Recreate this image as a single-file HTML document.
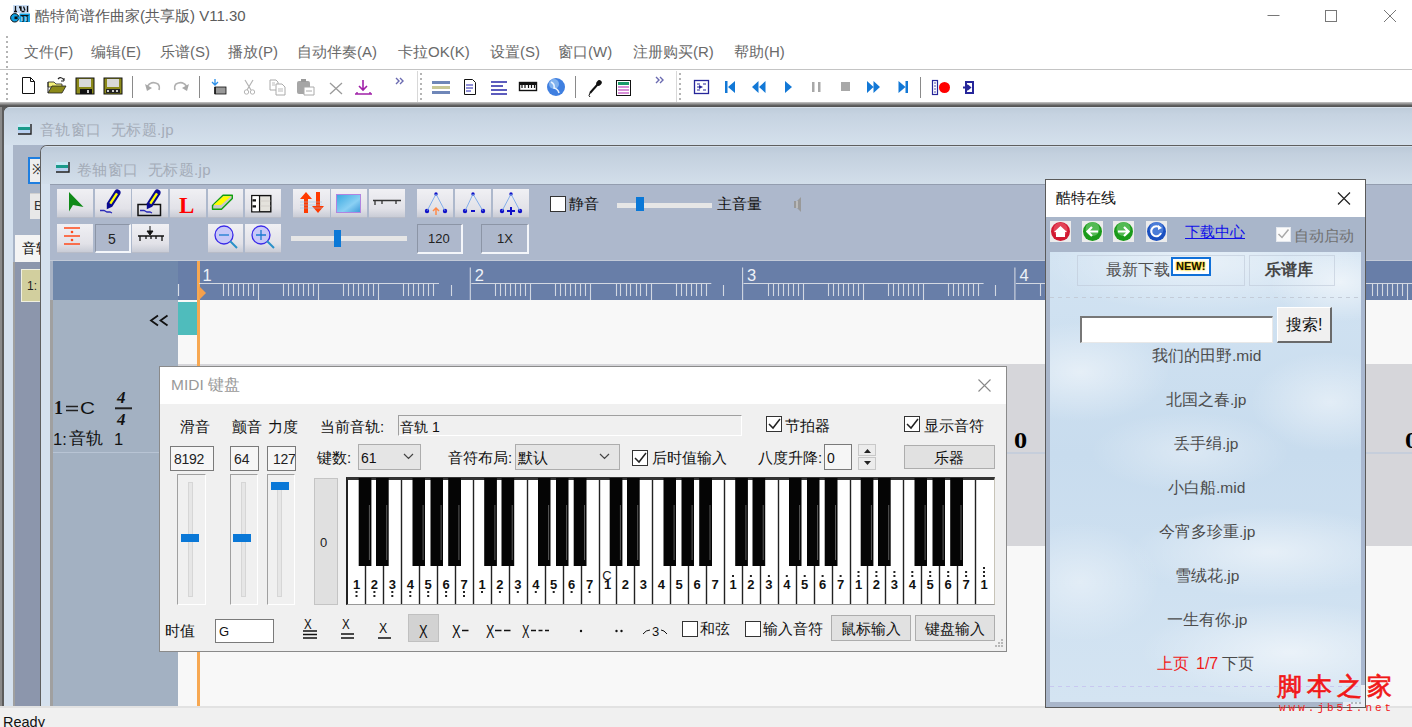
<!DOCTYPE html>
<html><head><meta charset="utf-8">
<style>
*{box-sizing:border-box;margin:0;padding:0}
html,body{width:1412px;height:727px;overflow:hidden;background:#fff;font-family:"Liberation Sans",sans-serif;position:relative}
.a{position:absolute}
.t{position:absolute;white-space:nowrap;line-height:1}
svg{position:absolute;overflow:visible}
.edit{background:#f6f6f6;border:1px solid #7a7a7a}
.cb{width:16px;height:16px;background:#fff;border:1px solid #333}
.wbtn{background:#e1e1e1;border:1px solid #adadad}
.slb{background:#f0f0f0;border-top:1px solid #a0a0a0;border-left:1px solid #a0a0a0;border-bottom:1px solid #fff;border-right:1px solid #fff}
.btn{background:linear-gradient(#f0f0f4,#e2e2e8 70%,#c9ccd6);border-bottom:1px solid #b8bcc8}
.sunk{background:#aeb8cc;border-top:1px solid #8c95a6;border-left:1px solid #8c95a6;border-bottom:2px solid #f4f6fa;border-right:2px solid #f4f6fa}
</style></head><body>

<!-- ===== title bar ===== -->
<div class="a" style="left:0;top:0;width:1412px;height:33px;background:#fff"></div>
<svg style="left:0;top:0" width="40" height="30">
 <rect x="13" y="5" width="16" height="8" fill="#c8dcf4"/>
 <path d="M15.5 6v5M19 7h2v4M23.5 6.5l1.5 4M27.5 6v6M14 11.5h3M21.5 11.5h3" stroke="#111" stroke-width="1.3"/>
 <circle cx="14.8" cy="17.8" r="4.2" fill="#0ea0e2" stroke="#111" stroke-width="1"/>
 <rect x="14.5" y="16.5" width="3.5" height="2.6" fill="#111"/><rect x="17.5" y="16.8" width="2.5" height="2" fill="#0ea0e2"/>
 <rect x="19.5" y="13.5" width="10.5" height="8.5" fill="#0ea0e2"/>
 <path d="M23 16v6M27 16v6M20.5 15.5h8" stroke="#111" stroke-width="1.2"/>
 <path d="M22 17v4M26 17v4" stroke="#e8f4ff" stroke-width="1"/>
</svg>
<div class="t" style="left:35px;top:8px;font-size:15px;color:#5c5c5c">酷特简谱作曲家(共享版) V11.30</div>
<svg style="left:1260px;top:0" width="152" height="33">
 <path d="M7.5 15.5h12" stroke="#777" stroke-width="1"/>
 <rect x="65.5" y="10.5" width="11" height="11" fill="none" stroke="#777" stroke-width="1"/>
 <path d="M124 10l12 12M136 10l-12 12" stroke="#777" stroke-width="1"/>
</svg>

<!-- ===== menu ===== -->
<div class="a" style="left:6px;top:36px;width:2px;height:32px;background:repeating-linear-gradient(#b4b4b4 0 2px,transparent 2px 5px)"></div>
<div class="t" style="left:24px;top:44px;font-size:15px;color:#6a6a6a">文件(F)</div>
<div class="t" style="left:91px;top:44px;font-size:15px;color:#6a6a6a">编辑(E)</div>
<div class="t" style="left:160px;top:44px;font-size:15px;color:#6a6a6a">乐谱(S)</div>
<div class="t" style="left:228px;top:44px;font-size:15px;color:#6a6a6a">播放(P)</div>
<div class="t" style="left:297px;top:44px;font-size:15px;color:#6a6a6a">自动伴奏(A)</div>
<div class="t" style="left:398px;top:44px;font-size:15px;color:#6a6a6a">卡拉OK(K)</div>
<div class="t" style="left:490px;top:44px;font-size:15px;color:#6a6a6a">设置(S)</div>
<div class="t" style="left:558px;top:44px;font-size:15px;color:#6a6a6a">窗口(W)</div>
<div class="t" style="left:633px;top:44px;font-size:15px;color:#6a6a6a">注册购买(R)</div>
<div class="t" style="left:734px;top:44px;font-size:15px;color:#6a6a6a">帮助(H)</div>
<div class="a" style="left:0;top:69px;width:1412px;height:1px;background:#c4c4c4"></div>
<!-- ===== toolbar ===== -->
<div class="a" style="left:6px;top:73px;width:2px;height:29px;background:repeating-linear-gradient(#b4b4b4 0 2px,transparent 2px 5px)"></div>
<div class="a" style="left:420px;top:73px;width:2px;height:29px;background:repeating-linear-gradient(#b4b4b4 0 2px,transparent 2px 5px)"></div>
<div class="a" style="left:679px;top:73px;width:2px;height:29px;background:repeating-linear-gradient(#b4b4b4 0 2px,transparent 2px 5px)"></div>
<div class="a" style="left:417px;top:71px;width:1px;height:32px;background:#d8d8d8"></div>
<div class="a" style="left:676px;top:71px;width:1px;height:32px;background:#d8d8d8"></div>
<svg style="left:0;top:70px" width="1000" height="34">
 <!-- new -->
 <path d="M22.5 7.5h8l4 4v12h-12z" fill="#fff" stroke="#111" stroke-width="1"/><path d="M30.5 7.5v4h4" fill="none" stroke="#111"/>
 <!-- open -->
 <path d="M48 12h6l2 2h6v3h-14z" fill="#f4f07a" stroke="#222" stroke-width="0.8"/>
 <path d="M48 23l4-7h14l-4 7z" fill="#8c8a1a" stroke="#222" stroke-width="0.8"/>
 <path d="M48 12v11" stroke="#222"/>
 <path d="M58 9q3-3 6 1" fill="none" stroke="#222" stroke-width="1.2"/><path d="M64 8v3h-3" fill="none" stroke="#222"/>
 <!-- save -->
 <rect x="76" y="8" width="18" height="16" fill="#8c8a1a" stroke="#111"/>
 <rect x="79" y="9" width="12" height="8" fill="#d8d8d8"/>
 <rect x="80" y="19" width="12" height="5" fill="#111"/><rect x="87" y="20" width="2" height="3" fill="#ccc"/>
 <!-- save all -->
 <rect x="104" y="8" width="18" height="16" fill="#8c8a1a" stroke="#111"/>
 <rect x="107" y="9" width="12" height="8" fill="#d8d8d8"/>
 <rect x="106" y="19" width="14" height="4" fill="#222"/>
 <rect x="107" y="20" width="2" height="2" fill="#ccc"/><rect x="112" y="20" width="2" height="2" fill="#ccc"/><rect x="116" y="20" width="2" height="2" fill="#ccc"/>
 <path d="M132.5 6v22" stroke="#8a8a8a"/>
 <!-- undo redo -->
 <path d="M147 17q4-7 11-3q2 2 1 6" fill="none" stroke="#b0b0b0" stroke-width="1.6"/><path d="M145 14l2 7 5-3z" fill="#a8a8a8"/>
 <path d="M187 17q-4-7-11-3q-2 2-1 6" fill="none" stroke="#b0b0b0" stroke-width="1.6"/><path d="M189 14l-2 7-5-3z" fill="#a8a8a8"/>
 <path d="M199.5 6v22" stroke="#8a8a8a"/>
 <!-- insert -->
 <rect x="215" y="17" width="11" height="7" fill="#999" stroke="#111" stroke-width="0.8"/>
 <path d="M215 17v7" stroke="#111" stroke-width="1.5"/>
 <path d="M215 9v6M212 12l3 3 3-3" fill="none" stroke="#2a8ee8" stroke-width="1.3"/>
 <!-- cut -->
 <path d="M245 10l6 10M253 10l-6 10" stroke="#b4b4b4" stroke-width="1.2"/>
 <circle cx="246.5" cy="22" r="2.2" fill="none" stroke="#b4b4b4"/><circle cx="252.5" cy="22" r="2.2" fill="none" stroke="#b4b4b4"/>
 <!-- copy -->
 <path d="M270 10h6l2 2v8h-8z" fill="#fff" stroke="#aaa"/><path d="M276 14h6l3 3v8h-9z" fill="#fff" stroke="#aaa"/>
 <path d="M278 19h5M278 21h5M272 13h3M272 15h3" stroke="#bbb"/>
 <!-- paste -->
 <rect x="297" y="11" width="13" height="13" rx="2" fill="#a6a6a6"/><rect x="301" y="9" width="5" height="3" fill="#999"/>
 <path d="M304 17h10v8h-10z" fill="#fff" stroke="#aaa"/><path d="M306 21h6" stroke="#aaa"/>
 <!-- delete -->
 <path d="M330 13l12 11M342 13l-12 11" stroke="#9a9a9a" stroke-width="1.3"/>
 <!-- download -->
 <path d="M363 10v10M359 16l4 4 4-4" fill="none" stroke="#a020a8" stroke-width="1.6"/>
 <path d="M355 24h17M357 22v2M370 22v2" stroke="#a020a8" stroke-width="1.4"/>
 <!-- >> -->
 <path d="M396 8l3 3-3 3M400 8l3 3-3 3" fill="none" stroke="#6a6ab0" stroke-width="1.4"/>
 <!-- lines -->
 <rect x="432" y="11" width="18" height="3" fill="#6f87b8"/><rect x="432" y="16" width="18" height="3" fill="#c8c896"/><rect x="432" y="21" width="18" height="3" fill="#6f87b8"/>
 <!-- doc -->
 <path d="M464.5 9.5h8l3 3v12h-11z" fill="#fff" stroke="#111"/><path d="M466 15h7M466 18h7M466 21h5" stroke="#2222b0"/>
 <!-- align -->
 <path d="M491 12h16M491 16h12M491 20h16M491 24h16" stroke="#2727a8" stroke-width="1.3"/>
 <!-- piano -->
 <rect x="519.5" y="12.5" width="17" height="8" fill="#fff" stroke="#111" stroke-width="1.4"/><rect x="519" y="12" width="18" height="3" fill="#111"/><path d="M522 15v3M525 15v3M528.5 15v3M531.5 15v3M534.5 15v3" stroke="#111" stroke-width="1.2"/>
 <!-- globe -->
 <circle cx="556" cy="17" r="9" fill="#3f7fe0"/><circle cx="554" cy="14" r="5" fill="#9cc6f4" opacity="0.7"/><path d="M551 12q4 2 3 6q4 1 5 5" stroke="#e8f2ff" stroke-width="1.5" fill="none"/>
 <path d="M575.5 6v22" stroke="#8a8a8a"/>
 <!-- mic -->
 <path d="M590 23l8-9" stroke="#111" stroke-width="2"/><ellipse cx="599" cy="13" rx="2.5" ry="3" fill="#111" transform="rotate(40 599 13)"/><path d="M590 23q-2 3 0 4" fill="none" stroke="#111"/>
 <!-- list -->
 <rect x="616.5" y="10.5" width="14" height="15" fill="#fff" stroke="#111"/><rect x="618" y="12" width="11" height="3" fill="#1a9a6a"/>
 <path d="M618 17h11M618 20h11M618 23h11" stroke="#b020b0" stroke-width="1.2"/>
 <path d="M656 7l3 3-3 3M660 7l3 3-3 3" fill="none" stroke="#6a6ab0" stroke-width="1.4"/>
 <!-- transport -->
 <rect x="694.5" y="10.5" width="14" height="13" fill="#fff" stroke="#26269a" stroke-width="1.3"/><path d="M697 14h3M697 17h3M697 20h3M703 14h3M703 20h3" stroke="#26269a"/><path d="M699 15l4 2-4 2z" fill="#26269a"/>
 <path d="M725 11h2.5v12h-2.5zM735 11l-7 6 7 6z" fill="#1278d6"/>
 <path d="M758.5 11l-6.5 6 6.5 6zM765.5 11l-6.5 6 6.5 6z" fill="#1278d6"/>
 <path d="M785 11l7 6-7 6z" fill="#1278d6"/>
 <path d="M812 12h2.5v10h-2.5zM818 12h2.5v10h-2.5z" fill="#a8a8a8"/>
 <rect x="841" y="12" width="9" height="9" fill="#a8a8a8"/>
 <path d="M867 11l6.5 6-6.5 6zM873.5 11l6.5 6-6.5 6z" fill="#1278d6"/>
 <path d="M898.5 11l7 6-7 6zM905.5 11h2.5v12h-2.5z" fill="#1278d6"/>
 <path d="M920.5 7v21" stroke="#8a8a8a"/>
 <rect x="932.5" y="10.5" width="5" height="14" fill="#fff" stroke="#26269a" stroke-width="1.2"/><path d="M934 13h2M934 16h2M934 19h2M934 22h2" stroke="#26269a" stroke-width="0.8"/>
 <circle cx="944.5" cy="17.5" r="5.5" fill="#f00"/>
 <path d="M966 12h7v11h-7zM963 17.5h7M967 15l3 2.5-3 2.5" fill="none" stroke="#26269a" stroke-width="2"/>
</svg>

<!-- ===== MDI ===== -->
<div class="a" style="left:0;top:102px;width:1412px;height:605px;background:linear-gradient(#c8c8c8,#8c8c8c 2px,#4e4e4e 4px,#5c5c5c 5px);"></div>
<div class="a" style="left:0;top:107px;width:2px;height:600px;background:#8a8a8a"></div>

<!-- child 1 -->
<div class="a" style="left:4px;top:107px;width:1420px;height:600px;background:#d5e1ee;border-top-left-radius:6px"></div>
<div class="a" style="left:4px;top:107px;width:1420px;height:38px;background:linear-gradient(#e2eaf2,#bfcddb 1.5px,#c6d3e1 20%,#d4e0ec);border-top-left-radius:6px"></div>
<svg style="left:0;top:0" width="80" height="145">
 <rect x="18" y="124" width="12" height="3" fill="#c8e8f4"/><rect x="18" y="127" width="12" height="3" fill="#1a9a8a"/><rect x="18" y="130" width="12" height="3" fill="#b8d0f0"/><path d="M18 134h13v-10" fill="none" stroke="#222" stroke-width="1.4"/>
</svg>
<div class="t" style="left:40px;top:122px;font-size:15px;letter-spacing:0.4px;color:#a4acb8">音轨窗口&nbsp;&nbsp;无标题.jp</div>
<div class="a" style="left:13px;top:145px;width:1400px;height:561px;background:#a9b5c8"></div>
<div class="a" style="left:28px;top:157px;width:14px;height:27px;background:#eee;border:2px solid #1e7ee0"></div>
<div class="t" style="left:32px;top:162px;font-size:14px;color:#333">※</div>
<div class="a" style="left:30px;top:193px;width:12px;height:26px;background:#e8e8e8;border-top:1px solid #d0d0d0"></div>
<div class="t" style="left:34px;top:199px;font-size:13px;color:#333">B</div>
<div class="a" style="left:15px;top:235px;width:26px;height:27px;background:#f4f4f4"></div>
<div class="t" style="left:22px;top:241px;font-size:14px;color:#111">音轨</div>
<div class="a" style="left:13px;top:262px;width:2px;height:444px;background:#a0a0a0"></div>
<div class="a" style="left:15px;top:262px;width:26px;height:444px;background:#8c96ac"></div>
<div class="a" style="left:21px;top:269px;width:20px;height:33px;background:#d2cf9e;border:1px solid #f0f0e0"></div>
<div class="t" style="left:27px;top:280px;font-size:12px;color:#222">1:</div>

<!-- child 2 -->
<div class="a" style="left:40px;top:145px;width:1380px;height:561px;background:#5f5f5f;border-top-left-radius:7px"></div>
<div class="a" style="left:41px;top:146px;width:1380px;height:560px;background:#d5e1ee;border-top-left-radius:6px"></div>
<div class="a" style="left:41px;top:146px;width:1380px;height:38px;background:linear-gradient(#dfe8f1,#bccad9 1.5px,#c3d0de 20%,#d2deea);border-top-left-radius:6px"></div>
<svg style="left:0;top:0" width="80" height="185">
 <rect x="56" y="162" width="12" height="3" fill="#c8e8f4"/><rect x="56" y="165" width="12" height="3" fill="#1a9a8a"/><rect x="56" y="168" width="12" height="3" fill="#b8d0f0"/><path d="M56 172h13v-10" fill="none" stroke="#222" stroke-width="1.4"/>
</svg>
<div class="t" style="left:77px;top:162px;font-size:15px;letter-spacing:0.4px;color:#a4acb8">卷轴窗口&nbsp;&nbsp;无标题.jp</div>
<div class="a" style="left:50px;top:184px;width:1370px;height:522px;background:#adb8cc;border-top:1px solid #939daf"></div>
<div class="a" style="left:50px;top:260px;width:1370px;height:1px;background:#c2cad8"></div>
<div class="a btn" style="left:57px;top:189px;width:36px;height:29px"></div>
<div class="a btn" style="left:95px;top:189px;width:36px;height:29px"></div>
<div class="a btn" style="left:132px;top:189px;width:36px;height:29px"></div>
<div class="a btn" style="left:170px;top:189px;width:36px;height:29px"></div>
<div class="a btn" style="left:208px;top:189px;width:35px;height:29px"></div>
<div class="a btn" style="left:245px;top:189px;width:36px;height:29px"></div>
<div class="a btn" style="left:293px;top:189px;width:37px;height:29px"></div>
<div class="a btn" style="left:331px;top:189px;width:36px;height:29px"></div>
<div class="a btn" style="left:369px;top:189px;width:36px;height:29px"></div>
<div class="a btn" style="left:417px;top:189px;width:36px;height:29px"></div>
<div class="a btn" style="left:455px;top:189px;width:36px;height:29px"></div>
<div class="a btn" style="left:493px;top:189px;width:36px;height:29px"></div>
<div class="a btn" style="left:57px;top:224px;width:36px;height:29px"></div>
<div class="a btn" style="left:132px;top:224px;width:37px;height:29px"></div>
<div class="a btn" style="left:208px;top:224px;width:35px;height:29px"></div>
<div class="a btn" style="left:245px;top:224px;width:36px;height:29px"></div>
<div class="a sunk" style="left:95px;top:224px;width:36px;height:29px"></div>
<div class="t" style="left:108px;top:232px;font-size:14px;color:#222">5</div>
<div class="a sunk" style="left:417px;top:224px;width:46px;height:30px"></div>
<div class="t" style="left:428px;top:232px;font-size:13px;color:#222">120</div>
<div class="a sunk" style="left:481px;top:224px;width:48px;height:30px"></div>
<div class="t" style="left:497px;top:232px;font-size:13px;color:#222">1X</div>
<div class="a" style="left:291px;top:236px;width:116px;height:5px;background:#e6e6e6"></div>
<div class="a" style="left:334px;top:230px;width:7px;height:17px;background:#0a78d7"></div>
<div class="a" style="left:550px;top:196px;width:16px;height:16px;background:#fff;border:1px solid #333"></div>
<div class="t" style="left:569px;top:196px;font-size:15px;color:#111">静音</div>
<div class="a" style="left:617px;top:203px;width:95px;height:5px;background:#e6e6e6"></div>
<div class="a" style="left:636px;top:197px;width:8px;height:14px;background:#0a78d7"></div>
<div class="t" style="left:717px;top:196px;font-size:15px;color:#111">主音量</div>
<svg style="left:0;top:0" width="820" height="262">
 <!-- arrow -->
 <path d="M69 192v19.5l4-6.5 10.5 2z" fill="#108a18"/>
 <!-- pencil -->
 <path d="M106.8 203.3L114.8 190.8A3.2 3.2 0 0 1 120.2 194.2L112.2 206.7L106.8 209.2z" fill="#0a0a90"/><path d="M110.3 203.7L117.0 193.3" stroke="#ffff00" stroke-width="2.4"/>
 <path d="M100 210.5h4l3 1.5h3l2 1" fill="none" stroke="#2a2ab8" stroke-width="1.3"/>
 <!-- pencil box -->
 <rect x="138" y="204.5" width="22.5" height="11" fill="none" stroke="#111" stroke-width="1.5"/>
 <path d="M146.8 203.3L154.8 190.8A3.2 3.2 0 0 1 160.2 194.2L152.2 206.7L146.8 209.2z" fill="#0a0a90"/><path d="M150.3 203.7L157.0 193.3" stroke="#ffff00" stroke-width="2.4"/>
 <path d="M140 210.5h4l3 1.5h3l2 1" fill="none" stroke="#2a2ab8" stroke-width="1.3"/>
 <!-- eraser -->
 <path d="M212.5 205.5L223 195.2h9.3v3.4L221.5 209.3h-9z" fill="#c8c8c8" stroke="#10a010" stroke-width="1.4" stroke-linejoin="round"/>
 <path d="M213.5 205L223.5 196.2h7.5L221 205z" fill="#ffff00"/>
 <!-- grid -->
 <rect x="251.8" y="195.6" width="19" height="16.2" fill="#e4e2dc" stroke="#111" stroke-width="1.4"/><path d="M259.5 196v15.5" stroke="#111" stroke-width="1.3"/>
 <path d="M252.5 196.3h6.3v15h-6.3z" fill="#fff"/><path d="M252.5 199.3h3.5v2.2h-3.5zM252.5 205.3h3.5v2.2h-3.5z" fill="#111"/>
 <path d="M260 201h10.5M260 206h10.5" stroke="#cfcdc6" stroke-width="0.8"/>
 <!-- up down -->
 <path d="M304 213v-14h-4l6-7 6 7h-4v14z" fill="#ff3a00"/><path d="M316 192v14h-4l6 7 6-7h-4v-14z" fill="#ff3a00"/>
 <path d="M300 202h22M300 205h22M300 208h22" stroke="#9ac0e8" stroke-width="0.7" opacity="0.8"/>
 <!-- blue rect -->
 <defs><linearGradient id="bg1" x1="0" y1="0" x2="1" y2="1"><stop offset="0" stop-color="#38a8e0"/><stop offset="0.6" stop-color="#8ad0f4"/><stop offset="1" stop-color="#3a98d8"/></linearGradient></defs>
 <rect x="336.5" y="194.5" width="24" height="18" fill="url(#bg1)" stroke="#b084e0" stroke-width="1"/>
 <!-- line -->
 <path d="M373 200.5h28" stroke="#333" stroke-width="1.5"/><path d="M375 201v4M382 201v3M396 201v3" stroke="#333" stroke-width="1.3"/>
 <!-- triangles -->
 <g fill="#1010c8"><circle cx="436" cy="194" r="1.7"/><circle cx="427" cy="211" r="2.2"/><circle cx="445" cy="211" r="2.2"/>
 <circle cx="473" cy="194" r="1.7"/><circle cx="465" cy="211" r="2.2"/><circle cx="483" cy="211" r="2.2"/>
 <circle cx="511" cy="194" r="1.7"/><circle cx="502" cy="211" r="2.2"/><circle cx="520" cy="211" r="2.2"/></g>
 <path d="M436 194l-9 17M436 194l9 17M473 194l-8 17M473 194l10 17M511 194l-9 17M511 194l9 17" stroke="#6aa0e8" stroke-width="0.8"/>
 <path d="M436 215v-7M433 211l3-3 3 3" fill="none" stroke="#ff8a4a" stroke-width="1.5"/>
 <path d="M471 211h4" stroke="#1010c8" stroke-width="2"/>
 <path d="M507 211h8M511 207v8" stroke="#1010c8" stroke-width="2"/>
 <!-- row2 -->
 <path d="M64 228h16M64 236h16M64 244h16" stroke="#ff4a1a" stroke-width="1.3"/><circle cx="72" cy="232" r="1.3" fill="#ff4a1a"/><circle cx="72" cy="240" r="1.3" fill="#ff4a1a"/>
 <path d="M138 236h26M140 236v5M146 236v3M151 236v3M156 236v3M162 236v5" stroke="#111" stroke-width="1.3"/><path d="M150 226v8M147 231l3 4 3-4z" stroke="#111" fill="#111"/>
 <circle cx="224" cy="235" r="9" fill="#c8c8f8" stroke="#3a2ae8" stroke-width="1.3"/><path d="M219 235h10" stroke="#1a7ad0" stroke-width="1.3"/><path d="M230 241l7 7" stroke="#2a90c8" stroke-width="2"/>
 <circle cx="261" cy="235" r="9" fill="#c8c8f8" stroke="#3a2ae8" stroke-width="1.3"/><path d="M256 235h10M261 230v10" stroke="#1a7ad0" stroke-width="1.3"/><path d="M267 241l7 7" stroke="#2a90c8" stroke-width="2"/>
 <!-- red L -->
 <text x="179" y="213" font-family="Liberation Serif" font-size="23" font-weight="bold" fill="#f00">L</text>
 <!-- speaker -->
 <path d="M794 201h3l4-4v15l-4-4h-3z" fill="#999"/><path d="M797 201v7" stroke="#ddd"/>
</svg>
<!-- ruler -->
<div class="a" style="left:53px;top:261px;width:125px;height:39px;background:#7088ab"></div>
<div class="a" style="left:178px;top:261px;width:1240px;height:39px;background:#687ea8"></div>
<!-- track area -->
<div class="a" style="left:50px;top:261px;width:3px;height:445px;background:#a7b2c4"></div>
<div class="a" style="left:50px;top:300px;width:3px;height:406px;background:#a0a0a0"></div>
<div class="a" style="left:53px;top:300px;width:125px;height:406px;background:#a3b1c2"></div>
<div class="a" style="left:178px;top:300px;width:1240px;height:406px;background:#f8f8f8"></div>
<div class="a" style="left:178px;top:364px;width:1240px;height:182px;background:#d6d6da"></div>
<div class="a" style="left:178px;top:452px;width:1240px;height:2px;background:#c6cedb"></div>
<div class="a" style="left:53px;top:452px;width:125px;height:1px;background:#b8c4d4"></div>
<div class="a" style="left:178px;top:302px;width:19px;height:33px;background:#4fbcbc"></div>
<div class="a" style="left:197px;top:261px;width:3px;height:445px;background:#f7a852"></div>
<svg style="left:0;top:0" width="1412" height="310">
<path d="M199.0 283.5h240.0 M223.5 284v12 M228.5 284v12 M233.5 284v12 M238.5 284v12 M243.5 284v12 M248.5 284v12 M253.5 284v12 M258.5 284v16 M283.5 284v12 M288.5 284v12 M293.5 284v12 M298.5 284v12 M303.5 284v12 M308.5 284v12 M313.5 284v12 M318.5 284v16 M343.5 284v12 M348.5 284v12 M353.5 284v12 M358.5 284v12 M363.5 284v12 M368.5 284v12 M373.5 284v12 M378.5 284v16 M403.5 284v12 M408.5 284v12 M413.5 284v12 M418.5 284v12 M423.5 284v12 M428.5 284v12 M433.5 284v12 M451.5 285v11 M470.3 267.5v32.5 M471.3 283.5h240.0 M495.5 284v12 M500.5 284v12 M505.5 284v12 M510.5 284v12 M515.5 284v12 M520.5 284v12 M525.5 284v12 M530.5 284v16 M555.5 284v12 M560.5 284v12 M565.5 284v12 M570.5 284v12 M575.5 284v12 M580.5 284v12 M585.5 284v12 M590.5 284v16 M616.5 284v12 M620.5 284v12 M626.5 284v12 M630.5 284v12 M636.5 284v12 M640.5 284v12 M646.5 284v12 M651.5 284v16 M676.5 284v12 M681.5 284v12 M686.5 284v12 M691.5 284v12 M696.5 284v12 M701.5 284v12 M706.5 284v12 M723.5 285v11 M742.6 267.5v32.5 M743.6 283.5h240.0 M768.5 284v12 M773.5 284v12 M778.5 284v12 M783.5 284v12 M788.5 284v12 M793.5 284v12 M798.5 284v12 M803.5 284v16 M828.5 284v12 M833.5 284v12 M838.5 284v12 M843.5 284v12 M848.5 284v12 M853.5 284v12 M858.5 284v12 M863.5 284v16 M888.5 284v12 M893.5 284v12 M898.5 284v12 M903.5 284v12 M908.5 284v12 M913.5 284v12 M918.5 284v12 M923.5 284v16 M948.5 284v12 M953.5 284v12 M958.5 284v12 M963.5 284v12 M968.5 284v12 M973.5 284v12 M978.5 284v12 M995.5 285v11 M1014.9 267.5v32.5 M1015.9 283.5h240.0 M1040.5 284v12 M1045.5 284v12 M1050.5 284v12 M1055.5 284v12 M1060.5 284v12 M1065.5 284v12 M1070.5 284v12 M1075.5 284v16 M1100.5 284v12 M1105.5 284v12 M1110.5 284v12 M1115.5 284v12 M1120.5 284v12 M1125.5 284v12 M1130.5 284v12 M1135.5 284v16 M1160.5 284v12 M1165.5 284v12 M1170.5 284v12 M1175.5 284v12 M1180.5 284v12 M1185.5 284v12 M1190.5 284v12 M1195.5 284v16 M1220.5 284v12 M1225.5 284v12 M1230.5 284v12 M1235.5 284v12 M1240.5 284v12 M1245.5 284v12 M1250.5 284v12 M1268.5 285v11 M1287.2 267.5v32.5 M1288.2 283.5h240.0 M1312.5 284v12 M1317.5 284v12 M1322.5 284v12 M1327.5 284v12 M1332.5 284v12 M1337.5 284v12 M1342.5 284v12 M1347.5 284v16 M1372.5 284v12 M1377.5 284v12 M1382.5 284v12 M1387.5 284v12 M1392.5 284v12 M1397.5 284v12 M1402.5 284v12 M1407.5 284v16 M1432.5 284v12 M1437.5 284v12 M1442.5 284v12 M1447.5 284v12 M1452.5 284v12 M1457.5 284v12 M1462.5 284v12 M1468.5 284v16 M1492.5 284v12 M1498.5 284v12 M1502.5 284v12 M1508.5 284v12 M1512.5 284v12 M1518.5 284v12 M1522.5 284v12 M1540.5 285v11" stroke="#d2d8e2" stroke-width="1.1" fill="none"/>
<text x="202.5" y="281" font-family="Liberation Sans" font-size="16.5" fill="#eef2f8">1</text>
<text x="474.8" y="281" font-family="Liberation Sans" font-size="16.5" fill="#eef2f8">2</text>
<text x="747.1" y="281" font-family="Liberation Sans" font-size="16.5" fill="#eef2f8">3</text>
<text x="1019.4" y="281" font-family="Liberation Sans" font-size="16.5" fill="#eef2f8">4</text>
<text x="1291.7" y="281" font-family="Liberation Sans" font-size="16.5" fill="#eef2f8">5</text>
<path d="M199 286l7 7-7 7z" fill="#f5a04c"/>
<path d="M178.5 284v12" stroke="#d8dee8" stroke-width="1.2"/>
</svg>
<svg style="left:0;top:0" width="180" height="450">
 <path d="M158 315.5l-7 5 7 5M167.5 315.5l-7 5 7 5" fill="none" stroke="#111" stroke-width="1.8"/>
 <path d="M66 406.5h12M66 410.5h12" stroke="#222" stroke-width="1.6"/>
 <path d="M115 408.3h17" stroke="#222" stroke-width="2"/>
</svg>
<div class="t" style="left:54px;top:399px;font-size:18px;color:#111;font-family:'Liberation Serif';font-weight:bold">1</div>
<div class="t" style="left:80px;top:400px;font-size:17px;color:#111;transform:scaleX(1.22);transform-origin:0 0">C</div>
<div class="t" style="left:117px;top:389px;font-size:17px;color:#111;font-family:'Liberation Serif';font-weight:bold;font-style:italic">4</div>
<div class="t" style="left:117px;top:411px;font-size:17px;color:#111;font-family:'Liberation Serif';font-weight:bold;font-style:italic">4</div>
<div class="t" style="left:53px;top:431px;font-size:16.5px;color:#111">1:</div>
<div class="t" style="left:69px;top:430px;font-size:17px;color:#111">音轨</div>
<div class="t" style="left:114px;top:431px;font-size:16.5px;color:#111">1</div>
<div class="t" style="left:1014px;top:429px;font-size:23.5px;color:#000;font-family:'Liberation Serif';font-weight:bold;transform:scaleX(1.12);transform-origin:0 0">0</div>
<div class="t" style="left:1405px;top:429px;font-size:23.5px;color:#000;font-family:'Liberation Serif';font-weight:bold;transform:scaleX(1.12);transform-origin:0 0">0</div>
<!-- ===== MIDI dialog ===== -->
<div class="a" style="left:159px;top:366px;width:848px;height:286px;background:#f0f0f0;border:1px solid #8a8a8a"></div>
<div class="a" style="left:160px;top:367px;width:846px;height:37px;background:#fff"></div>
<div class="t" style="left:171px;top:377px;font-size:15.5px;color:#999">MIDI 键盘</div>
<svg style="left:0;top:0" width="1010" height="400"><path d="M978.5 379.5l12 12M990.5 379.5l-12 12" stroke="#888" stroke-width="1.1"/></svg>
<div class="t" style="left:180px;top:419px;font-size:15px;color:#111">滑音</div>
<div class="t" style="left:232px;top:419px;font-size:15px;color:#111">颤音</div>
<div class="t" style="left:268px;top:419px;font-size:15px;color:#111">力度</div>
<div class="t" style="left:320px;top:419px;font-size:15px;color:#111">当前音轨:</div>
<div class="a" style="left:398px;top:415px;width:344px;height:21px;background:#f0f0f0;border-top:1px solid #a0a0a0;border-left:1px solid #a0a0a0;border-bottom:1px solid #fff;border-right:1px solid #fff"></div>
<div class="t" style="left:400px;top:420px;font-size:14px;color:#111">音轨 1</div>
<div class="a edit" style="left:170px;top:446px;width:44px;height:25px"></div>
<div class="t" style="left:174px;top:452px;font-size:14px;color:#222;letter-spacing:-0.3px">8192</div>
<div class="a edit" style="left:230px;top:446px;width:29px;height:25px"></div>
<div class="t" style="left:234px;top:452px;font-size:14px;color:#222">64</div>
<div class="a edit" style="left:267px;top:446px;width:29px;height:25px;overflow:hidden;padding-right:2px;background-clip:padding-box"><div class="t" style="left:5px;top:5px;font-size:14px;color:#222;letter-spacing:-0.3px">127</div></div>
<div class="t" style="left:317px;top:450px;font-size:15px;color:#111">键数:</div>
<div class="a" style="left:358px;top:444px;width:63px;height:26px;background:#e5e5e5;border:1px solid #adadad"></div>
<div class="t" style="left:361px;top:451px;font-size:14px;color:#111">61</div>
<div class="t" style="left:448px;top:450px;font-size:15px;color:#111">音符布局:</div>
<div class="a" style="left:515px;top:444px;width:105px;height:26px;background:#e5e5e5;border:1px solid #adadad"></div>
<div class="t" style="left:518px;top:450px;font-size:15px;color:#111">默认</div>
<svg style="left:0;top:0" width="1010" height="660">
 <path d="M404 454l4.5 4.5 4.5-4.5M600 454l4.5 4.5 4.5-4.5" fill="none" stroke="#444" stroke-width="1.2"/>
</svg>
<div class="a cb" style="left:766px;top:416px"></div>
<div class="t" style="left:785px;top:418px;font-size:15px;color:#111">节拍器</div>
<div class="a cb" style="left:904px;top:416px"></div>
<div class="t" style="left:924px;top:418px;font-size:15px;color:#111">显示音符</div>
<div class="a cb" style="left:632px;top:450px"></div>
<div class="t" style="left:652px;top:450px;font-size:15px;color:#111">后时值输入</div>
<div class="t" style="left:758px;top:450px;font-size:15px;color:#111">八度升降:</div>
<div class="a edit" style="left:824px;top:444px;width:28px;height:26px"></div>
<div class="t" style="left:827px;top:451px;font-size:14px;color:#111">0</div>
<div class="a" style="left:858px;top:444px;width:18px;height:12px;background:#ececec;border:1px solid #c8c8c8"></div>
<div class="a" style="left:858px;top:457px;width:18px;height:13px;background:#ececec;border:1px solid #c8c8c8"></div>
<div class="a wbtn" style="left:904px;top:445px;width:91px;height:24px"></div>
<div class="t" style="left:934px;top:450px;font-size:15px;color:#111">乐器</div>
<svg style="left:0;top:0" width="1010" height="660">
 <path d="M769 424l4 4 7-9M907 424l4 4 7-9M635 458l4 4 7-9" fill="none" stroke="#222" stroke-width="1.5"/>
 <path d="M864 453l3.5-4 3.5 4z M864 461l3.5 4 3.5-4z" fill="#222"/>
</svg>
<!-- sliders -->
<div class="a slb" style="left:177px;top:474px;width:29px;height:131px"></div>
<div class="a" style="left:188px;top:482px;width:5px;height:115px;background:#e6e6e6;border:1px solid #d6d6d6"></div>
<div class="a" style="left:181px;top:534px;width:18px;height:8px;background:#0a78d7"></div>
<div class="a slb" style="left:230px;top:474px;width:28px;height:131px"></div>
<div class="a" style="left:241px;top:482px;width:5px;height:115px;background:#e6e6e6;border:1px solid #d6d6d6"></div>
<div class="a" style="left:233px;top:534px;width:18px;height:8px;background:#0a78d7"></div>
<div class="a slb" style="left:267px;top:474px;width:28px;height:131px"></div>
<div class="a" style="left:277px;top:482px;width:5px;height:115px;background:#e6e6e6;border:1px solid #d6d6d6"></div>
<div class="a" style="left:271px;top:482px;width:18px;height:8px;background:#0a78d7"></div>
<div class="a" style="left:314px;top:478px;width:24px;height:127px;background:#e0e0e0;border:1px solid #c4c4c4"></div>
<div class="t" style="left:320px;top:536px;font-size:13px;color:#222">0</div>
<!-- bottom row -->
<div class="t" style="left:165px;top:623px;font-size:15px;color:#111">时值</div>
<div class="a edit" style="left:215px;top:619px;width:59px;height:24px;background:#fff"></div>
<div class="t" style="left:219px;top:625px;font-size:13px;color:#111">G</div>
<div class="a" style="left:408px;top:614px;width:31px;height:28px;background:#d2d2d2;border:1px solid #c0c0c0"></div>
<div class="a cb" style="left:682px;top:621px"></div>
<div class="t" style="left:700px;top:621px;font-size:15px;color:#111">和弦</div>
<div class="a cb" style="left:745px;top:621px"></div>
<div class="t" style="left:763px;top:621px;font-size:15px;color:#111">输入音符</div>
<div class="a wbtn" style="left:831px;top:615px;width:80px;height:26px"></div>
<div class="t" style="left:841px;top:621px;font-size:15px;color:#111">鼠标输入</div>
<div class="a wbtn" style="left:915px;top:615px;width:80px;height:26px"></div>
<div class="t" style="left:925px;top:621px;font-size:15px;color:#111">键盘输入</div>
<svg style="left:0;top:0" width="1010" height="660">
 <g font-family="Liberation Sans" fill="#111">
  <text font-size="14" transform="translate(304 628.5) scale(0.82 1)">X</text>
  <text font-size="14" transform="translate(342 628.5) scale(0.82 1)">X</text>
  <text font-size="15" transform="translate(379 632.5) scale(0.82 1)">X</text>
  <text font-size="18" transform="translate(419 637.5) scale(0.72 1)">X</text>
  <text font-size="18" transform="translate(452 637.5) scale(0.72 1)">X</text>
  <text font-size="18" transform="translate(486 637.5) scale(0.7 1)">X</text>
  <text font-size="18" transform="translate(522 637.5) scale(0.62 1)">X</text>
 </g>
 <path d="M303 631h14M303 634.5h14M303 638h14M341 634h13M341 638h13M378 638h13" stroke="#111" stroke-width="1.4"/>
 <path d="M462 630.5h6.5M495 630.5h6.5M504 630.5h6.5M531 630.5h5M538.5 630.5h4M545 630.5h4" stroke="#111" stroke-width="1.3"/>
 <circle cx="581" cy="631" r="1.2" fill="#111"/><circle cx="616.5" cy="631" r="1.2" fill="#111"/><circle cx="621.5" cy="631" r="1.2" fill="#111"/>
 <text x="652" y="636" font-family="Liberation Sans" font-size="13" fill="#111">3</text>
 <path d="M643 634q3-4 7-4M661 630q3 0 6 4" fill="none" stroke="#111" stroke-width="1"/>
 <g fill="#b8b8b8"><rect x="1001" y="639" width="2" height="2"/><rect x="998" y="642" width="2" height="2"/><rect x="1001" y="642" width="2" height="2"/><rect x="995" y="645" width="2" height="2"/><rect x="998" y="645" width="2" height="2"/><rect x="1001" y="645" width="2" height="2"/></g>
</svg>
<!-- keyboard -->
<div class="a" style="left:346px;top:477px;width:649px;height:128px;background:#fff;border-left:2px solid #222;border-top:3px solid #333;border-right:1px solid #c8c4b8;border-bottom:1px solid #999"></div>
<svg style="left:0;top:0" width="1010" height="620">
<path d="M365.5 480v124 M383.5 480v124 M401.5 480v124 M419.5 480v124 M437.5 480v124 M455.5 480v124 M473.5 480v124 M491.5 480v124 M509.5 480v124 M527.5 480v124 M545.5 480v124 M563.5 480v124 M581.5 480v124 M599.5 480v124 M616.5 480v124 M634.5 480v124 M652.5 480v124 M670.5 480v124 M688.5 480v124 M706.5 480v124 M724.5 480v124 M742.5 480v124 M760.5 480v124 M778.5 480v124 M796.5 480v124 M814.5 480v124 M832.5 480v124 M850.5 480v124 M867.5 480v124 M885.5 480v124 M903.5 480v124 M921.5 480v124 M939.5 480v124 M957.5 480v124 M975.5 480v124" stroke="#222" stroke-width="1.4"/>
<rect x="358.7" y="478" width="12.7" height="88" fill="#050505"/><rect x="368.9" y="505" width="1" height="55" fill="#5a5a5a"/><rect x="376.0" y="478" width="12.7" height="88" fill="#050505"/><rect x="386.2" y="505" width="1" height="55" fill="#5a5a5a"/><rect x="412.5" y="478" width="12.5" height="88" fill="#050505"/><rect x="422.6" y="505" width="1" height="55" fill="#5a5a5a"/><rect x="430.5" y="478" width="12.5" height="88" fill="#050505"/><rect x="440.6" y="505" width="1" height="55" fill="#5a5a5a"/><rect x="448.2" y="478" width="12.8" height="88" fill="#050505"/><rect x="458.4" y="505" width="1" height="55" fill="#5a5a5a"/><rect x="484.2" y="478" width="12.7" height="88" fill="#050505"/><rect x="494.4" y="505" width="1" height="55" fill="#5a5a5a"/><rect x="501.5" y="478" width="12.7" height="88" fill="#050505"/><rect x="511.7" y="505" width="1" height="55" fill="#5a5a5a"/><rect x="538.0" y="478" width="12.5" height="88" fill="#050505"/><rect x="548.1" y="505" width="1" height="55" fill="#5a5a5a"/><rect x="556.0" y="478" width="12.5" height="88" fill="#050505"/><rect x="566.1" y="505" width="1" height="55" fill="#5a5a5a"/><rect x="573.7" y="478" width="12.8" height="88" fill="#050505"/><rect x="584.0" y="505" width="1" height="55" fill="#5a5a5a"/><rect x="609.7" y="478" width="12.7" height="88" fill="#050505"/><rect x="619.9" y="505" width="1" height="55" fill="#5a5a5a"/><rect x="627.0" y="478" width="12.7" height="88" fill="#050505"/><rect x="637.2" y="505" width="1" height="55" fill="#5a5a5a"/><rect x="663.5" y="478" width="12.5" height="88" fill="#050505"/><rect x="673.6" y="505" width="1" height="55" fill="#5a5a5a"/><rect x="681.5" y="478" width="12.5" height="88" fill="#050505"/><rect x="691.6" y="505" width="1" height="55" fill="#5a5a5a"/><rect x="699.2" y="478" width="12.8" height="88" fill="#050505"/><rect x="709.5" y="505" width="1" height="55" fill="#5a5a5a"/><rect x="735.2" y="478" width="12.7" height="88" fill="#050505"/><rect x="745.4" y="505" width="1" height="55" fill="#5a5a5a"/><rect x="752.5" y="478" width="12.7" height="88" fill="#050505"/><rect x="762.7" y="505" width="1" height="55" fill="#5a5a5a"/><rect x="789.0" y="478" width="12.5" height="88" fill="#050505"/><rect x="799.1" y="505" width="1" height="55" fill="#5a5a5a"/><rect x="807.0" y="478" width="12.5" height="88" fill="#050505"/><rect x="817.1" y="505" width="1" height="55" fill="#5a5a5a"/><rect x="824.7" y="478" width="12.8" height="88" fill="#050505"/><rect x="835.0" y="505" width="1" height="55" fill="#5a5a5a"/><rect x="860.7" y="478" width="12.7" height="88" fill="#050505"/><rect x="870.9" y="505" width="1" height="55" fill="#5a5a5a"/><rect x="878.0" y="478" width="12.7" height="88" fill="#050505"/><rect x="888.2" y="505" width="1" height="55" fill="#5a5a5a"/><rect x="914.5" y="478" width="12.5" height="88" fill="#050505"/><rect x="924.6" y="505" width="1" height="55" fill="#5a5a5a"/><rect x="932.5" y="478" width="12.5" height="88" fill="#050505"/><rect x="942.6" y="505" width="1" height="55" fill="#5a5a5a"/><rect x="950.2" y="478" width="12.8" height="88" fill="#050505"/><rect x="960.5" y="505" width="1" height="55" fill="#5a5a5a"/>
<g font-family="Liberation Sans" font-weight="bold" font-size="13" fill="#111" text-anchor="middle"><text x="356.5" y="589">1</text><text x="374.4" y="589">2</text><text x="392.3" y="589">3</text><text x="410.3" y="589">4</text><text x="428.2" y="589">5</text><text x="446.1" y="589">6</text><text x="464.0" y="589">7</text><text x="482.0" y="589">1</text><text x="499.9" y="589">2</text><text x="517.8" y="589">3</text><text x="535.8" y="589">4</text><text x="553.7" y="589">5</text><text x="571.6" y="589">6</text><text x="589.6" y="589">7</text><text x="607.5" y="589">1</text><text x="625.4" y="589">2</text><text x="643.3" y="589">3</text><text x="661.3" y="589">4</text><text x="679.2" y="589">5</text><text x="697.1" y="589">6</text><text x="715.1" y="589">7</text><text x="733.0" y="589">1</text><text x="750.9" y="589">2</text><text x="768.9" y="589">3</text><text x="786.8" y="589">4</text><text x="804.7" y="589">5</text><text x="822.6" y="589">6</text><text x="840.6" y="589">7</text><text x="858.5" y="589">1</text><text x="876.4" y="589">2</text><text x="894.4" y="589">3</text><text x="912.3" y="589">4</text><text x="930.2" y="589">5</text><text x="948.2" y="589">6</text><text x="966.1" y="589">7</text><text x="984.0" y="589">1</text></g>
<g fill="#222"><rect x="355.5" y="591" width="2" height="2"/><rect x="355.5" y="595" width="2" height="2"/><rect x="373.4" y="591" width="2" height="2"/><rect x="373.4" y="595" width="2" height="2"/><rect x="391.3" y="591" width="2" height="2"/><rect x="391.3" y="595" width="2" height="2"/><rect x="409.3" y="591" width="2" height="2"/><rect x="409.3" y="595" width="2" height="2"/><rect x="427.2" y="591" width="2" height="2"/><rect x="427.2" y="595" width="2" height="2"/><rect x="445.1" y="591" width="2" height="2"/><rect x="445.1" y="595" width="2" height="2"/><rect x="463.0" y="591" width="2" height="2"/><rect x="463.0" y="595" width="2" height="2"/><rect x="481.0" y="591" width="2" height="2"/><rect x="498.9" y="591" width="2" height="2"/><rect x="516.8" y="591" width="2" height="2"/><rect x="534.8" y="591" width="2" height="2"/><rect x="552.7" y="591" width="2" height="2"/><rect x="570.6" y="591" width="2" height="2"/><rect x="588.6" y="591" width="2" height="2"/><rect x="732.0" y="575" width="2" height="2"/><rect x="749.9" y="575" width="2" height="2"/><rect x="767.9" y="575" width="2" height="2"/><rect x="785.8" y="575" width="2" height="2"/><rect x="803.7" y="575" width="2" height="2"/><rect x="821.6" y="575" width="2" height="2"/><rect x="839.6" y="575" width="2" height="2"/><rect x="857.5" y="575" width="2" height="2"/><rect x="857.5" y="571" width="2" height="2"/><rect x="875.4" y="575" width="2" height="2"/><rect x="875.4" y="571" width="2" height="2"/><rect x="893.4" y="575" width="2" height="2"/><rect x="893.4" y="571" width="2" height="2"/><rect x="911.3" y="575" width="2" height="2"/><rect x="911.3" y="571" width="2" height="2"/><rect x="929.2" y="575" width="2" height="2"/><rect x="929.2" y="571" width="2" height="2"/><rect x="947.2" y="575" width="2" height="2"/><rect x="947.2" y="571" width="2" height="2"/><rect x="965.1" y="575" width="2" height="2"/><rect x="965.1" y="571" width="2" height="2"/><rect x="983.0" y="575" width="2" height="2"/><rect x="983.0" y="571" width="2" height="2"/><rect x="983.0" y="567" width="2" height="2"/></g>
<text x="607" y="580" font-family="Liberation Sans" font-size="13" fill="#222" text-anchor="middle">C</text>
</svg>
<!-- ===== online window ===== -->
<div class="a" style="left:1045px;top:179px;width:321px;height:529px;background:#a9b6ca;border:1px solid #5a5a5a"></div>
<div class="a" style="left:1046px;top:180px;width:319px;height:37px;background:#fff"></div>
<div class="t" style="left:1056px;top:190px;font-size:15px;color:#111">酷特在线</div>
<svg style="left:0;top:0" width="1412" height="710">
 <path d="M1338 192.5l12 12M1350 192.5l-12 12" stroke="#222" stroke-width="1.2"/>
</svg>
<div class="a" style="left:1050px;top:252px;width:311px;height:450px;overflow:hidden;background:
 radial-gradient(ellipse 70px 40px at 290px 30px,rgba(255,255,255,.6),transparent),
 radial-gradient(ellipse 90px 50px at 30px 120px,rgba(255,255,255,.5),transparent),
 radial-gradient(ellipse 80px 50px at 280px 150px,rgba(255,255,255,.45),transparent),
 radial-gradient(ellipse 100px 40px at 140px 200px,rgba(255,255,255,.35),transparent),
 radial-gradient(ellipse 140px 45px at 220px 300px,rgba(255,255,255,.5),transparent),
 radial-gradient(ellipse 80px 60px at 30px 330px,rgba(255,255,255,.4),transparent),
 radial-gradient(ellipse 150px 50px at 240px 400px,rgba(255,255,255,.55),transparent),
 radial-gradient(ellipse 160px 50px at 150px 10px,rgba(255,255,255,.5),transparent),
 linear-gradient(#d2e3f2,#c8dcee 45%,#cfe1f1 75%,#d4e4f2)"></div>
<div class="a" style="left:1077px;top:255px;width:168px;height:31px;border:1px solid rgba(190,200,215,.6)"></div>
<div class="a" style="left:1249px;top:255px;width:86px;height:31px;border:1px solid rgba(190,200,215,.6)"></div>
<div class="t" style="left:1106px;top:262px;font-size:16px;color:#505050">最新下载</div>
<div class="a" style="left:1171px;top:257px;width:40px;height:19px;background:#fff;border:2px solid #1070d8"></div>
<div class="t" style="left:1176px;top:261px;font-size:11px;font-weight:bold;color:#111;text-shadow:0 0 1px #ffd000,0 0 2px #ffd000,0 0 2px #ffd000">NEW!</div>
<div class="t" style="left:1265px;top:262px;font-size:16px;font-weight:bold;color:#444">乐谱库</div>
<div class="a" style="left:1050px;top:297px;width:311px;height:1px;background:repeating-linear-gradient(90deg,#c4ccd8 0 4px,transparent 4px 8px)"></div>
<div class="a" style="left:1080px;top:316px;width:193px;height:27px;background:#fff;border-top:2px solid #777;border-left:2px solid #777;border-bottom:1px solid #e8e8e8;border-right:1px solid #e8e8e8"></div>
<div class="a" style="left:1277px;top:307px;width:55px;height:36px;background:#f0f0f0;border-top:1px solid #fff;border-left:1px solid #fff;border-bottom:2px solid #6a6a6a;border-right:2px solid #6a6a6a"></div>
<div class="t" style="left:1286px;top:317px;font-size:16px;color:#111">搜索!</div>
<div class="t" style="left:1152px;top:348px;font-size:15.5px;color:#4c4c4c">我们的田野.mid</div>
<div class="t" style="left:1166px;top:392px;font-size:15.5px;color:#4c4c4c">北国之春.jp</div>
<div class="t" style="left:1174px;top:436px;font-size:15.5px;color:#4c4c4c">丢手绢.jp</div>
<div class="t" style="left:1168px;top:480px;font-size:15.5px;color:#4c4c4c">小白船.mid</div>
<div class="t" style="left:1159px;top:524px;font-size:15.5px;color:#4c4c4c">今宵多珍重.jp</div>
<div class="t" style="left:1175px;top:568px;font-size:15.5px;color:#4c4c4c">雪绒花.jp</div>
<div class="t" style="left:1167px;top:612px;font-size:15.5px;color:#4c4c4c">一生有你.jp</div>
<div class="t" style="left:1157px;top:656px;font-size:16px;color:#f01818">上页</div>
<div class="t" style="left:1196px;top:656px;font-size:16px;color:#f01818">1/7</div>
<div class="t" style="left:1222px;top:656px;font-size:16px;color:#4a4a4a">下页</div>
<div class="a" style="left:1050px;top:686px;width:311px;height:1px;background:repeating-linear-gradient(90deg,#c8c8f0 0 4px,transparent 4px 8px)"></div>
<!-- toolbar icons -->
<svg style="left:0;top:0" width="1412" height="710">
 <rect x="1050" y="221" width="21" height="21" fill="#ececec"/>
 <circle cx="1060.5" cy="231.5" r="9.5" fill="#d01830"/><circle cx="1060.5" cy="229.5" r="7" fill="#f06070" opacity=".6"/>
 <path d="M1054 232l6.5-6 6.5 6h-2v5h-9v-5z" fill="#fff"/>
 <rect x="1082" y="221" width="21" height="21" fill="#ececec"/>
 <circle cx="1092.5" cy="231.5" r="9.5" fill="#1a9a1a"/><circle cx="1092.5" cy="229" r="7" fill="#7ad07a" opacity=".6"/>
 <path d="M1098 231.5h-9M1092 227l-4.5 4.5 4.5 4.5" fill="none" stroke="#fff" stroke-width="2.2"/>
 <rect x="1113" y="221" width="21" height="21" fill="#ececec"/>
 <circle cx="1123.5" cy="231.5" r="9.5" fill="#1a9a1a"/><circle cx="1123.5" cy="229" r="7" fill="#7ad07a" opacity=".6"/>
 <path d="M1118 231.5h9M1124 227l4.5 4.5-4.5 4.5" fill="none" stroke="#fff" stroke-width="2.2"/>
 <rect x="1146" y="221" width="21" height="21" fill="#ececec"/>
 <circle cx="1156.5" cy="231.5" r="9.5" fill="#1a50c0"/><circle cx="1156.5" cy="229" r="7" fill="#6a9ae8" opacity=".6"/>
 <path d="M1160 228a5 5 0 1 0 1 5" fill="none" stroke="#fff" stroke-width="2"/><path d="M1158 225l4 3-4 2z" fill="#fff"/>
</svg>
<div class="t" style="left:1185px;top:224px;font-size:15px;color:#1010e8;text-decoration:underline">下载中心</div>
<div class="a" style="left:1276px;top:227px;width:15px;height:15px;background:#fbfbfb;border:1px solid #e4e8ee"></div>
<svg style="left:0;top:0" width="1412" height="710"><path d="M1278.5 234l3.5 3.5 6.5-8" fill="none" stroke="#a8a8a8" stroke-width="1.5"/></svg>
<div class="t" style="left:1294px;top:228px;font-size:15.3px;color:#707070">自动启动</div>
<!-- ===== status ===== -->
<div class="a" style="left:0;top:706px;width:1412px;height:21px;background:#f0f0f0;border-top:2px solid #e2e2e2"></div>
<div class="t" style="left:3px;top:715px;font-size:14.5px;color:#111">Ready</div>
<!-- online bottom frame over status -->
<div class="a" style="left:1045px;top:700px;width:1px;height:8px;background:#5a5a5a"></div>
<div class="a" style="left:1365px;top:700px;width:1px;height:8px;background:#5a5a5a"></div>
<div class="a" style="left:1045px;top:707px;width:321px;height:1px;background:#5a5a5a"></div>
<div class="a" style="left:1046px;top:702px;width:319px;height:5px;background:#a9b6ca"></div>
<div class="a" style="left:1361px;top:252px;width:4px;height:433px;background:#a9b8d0"></div>
<div class="a" style="left:1361px;top:685px;width:4px;height:22px;background:#e8eef4"></div>
<div class="a" style="left:1343px;top:702px;width:22px;height:5px;background:#e8eef4"></div>
<svg style="left:0;top:0" width="1412" height="727"><g fill="#b4b8c0"><rect x="1351" y="702" width="2" height="2"/><rect x="1355" y="702" width="2" height="2"/><rect x="1359" y="702" width="2" height="2"/></g></svg>
<!-- watermark -->
<div class="t" style="left:1277px;top:674px;font-size:25px;color:#f01818;font-family:'Liberation Serif';letter-spacing:5px;-webkit-text-stroke:0.7px #f01818;text-shadow:0 0 2px rgba(255,255,255,.8)">脚本之家</div>
<div class="t" style="left:1279px;top:703px;font-size:11px;color:#f01818;letter-spacing:3px;font-family:'Liberation Mono'">www.jb51.net</div>
</body></html>
